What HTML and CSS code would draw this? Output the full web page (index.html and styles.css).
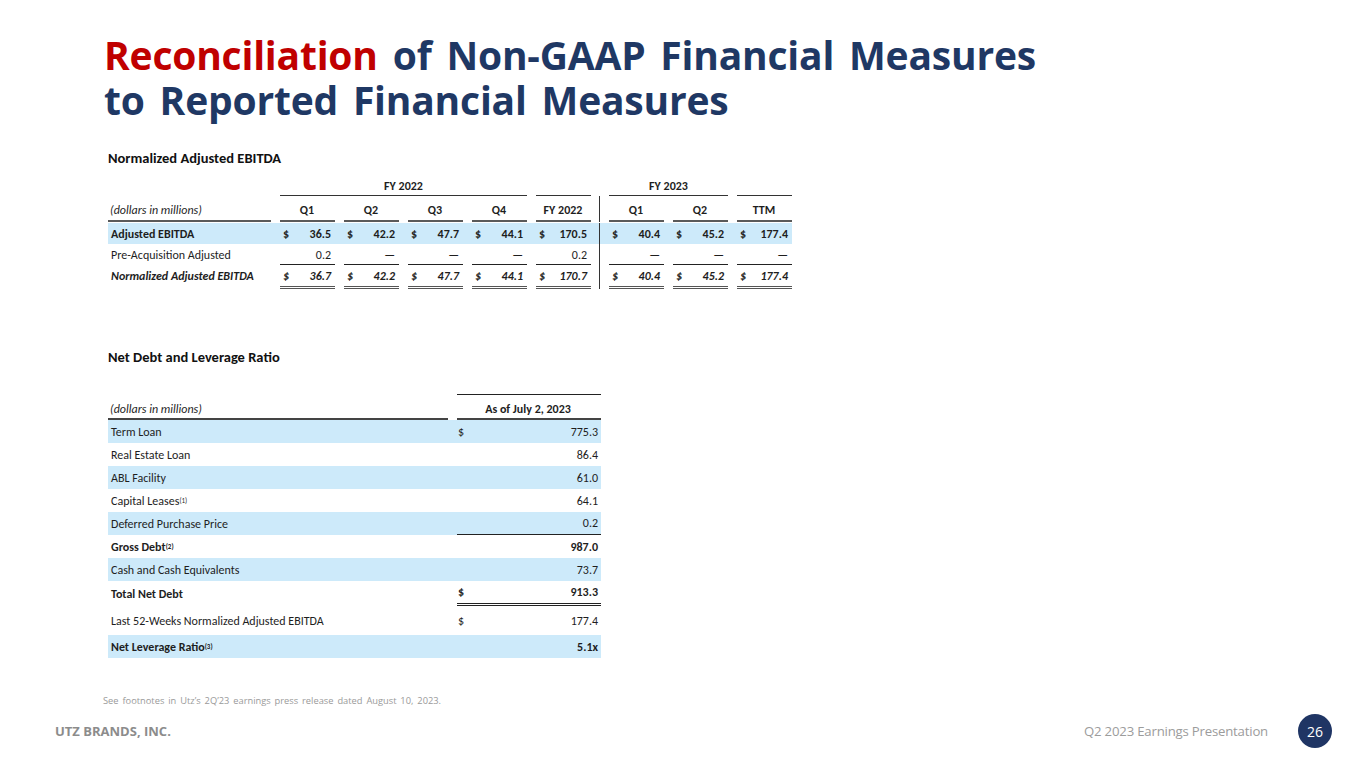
FILE: index.html
```html
<!DOCTYPE html>
<html lang="en">
<head>
<meta charset="utf-8">
<title>Reconciliation of Non-GAAP Financial Measures</title>
<link rel="stylesheet" href="styles.css">
</head>
<body>
<div class="slide">
  <h1 class="title"><span class="red">Reconciliation</span> of Non-GAAP Financial Measures<br>to Reported Financial Measures</h1>

  <section class="t1">
    <h2 class="tbl-title">Normalized Adjusted EBITDA</h2>
    <div class="row grp">
      <div class="lab"></div>
      <div class="grpcell w4">FY 2022</div>
      <div class="c line"></div>
      <div class="vspace"></div>
      <div class="grpcell w2">FY 2023</div>
      <div class="c line"></div>
    </div>
    <div class="row hdr">
      <div class="lab it">(dollars in millions)</div>
      <div class="c">Q1</div>
      <div class="c">Q2</div>
      <div class="c">Q3</div>
      <div class="c">Q4</div>
      <div class="c">FY 2022</div>
      <div class="vdiv"></div>
      <div class="c">Q1</div>
      <div class="c">Q2</div>
      <div class="c">TTM</div>
    </div>
    <div class="row r1 blue b">
      <div class="lab">Adjusted EBITDA</div>
      <div class="c"><span>$</span><span>36.5</span></div>
      <div class="c"><span>$</span><span>42.2</span></div>
      <div class="c"><span>$</span><span>47.7</span></div>
      <div class="c"><span>$</span><span>44.1</span></div>
      <div class="c"><span>$</span><span>170.5</span></div>
      <div class="vdiv"></div>
      <div class="c"><span>$</span><span>40.4</span></div>
      <div class="c"><span>$</span><span>45.2</span></div>
      <div class="c"><span>$</span><span>177.4</span></div>
    </div>
    <div class="row r2">
      <div class="lab">Pre-Acquisition Adjusted</div>
      <div class="c"><span></span><span>0.2</span></div>
      <div class="c"><span></span><span>—</span></div>
      <div class="c"><span></span><span>—</span></div>
      <div class="c"><span></span><span>—</span></div>
      <div class="c"><span></span><span>0.2</span></div>
      <div class="vdiv"></div>
      <div class="c"><span></span><span>—</span></div>
      <div class="c"><span></span><span>—</span></div>
      <div class="c"><span></span><span>—</span></div>
    </div>
    <div class="row r3 b it">
      <div class="lab">Normalized Adjusted EBITDA</div>
      <div class="c"><span>$</span><span>36.7</span></div>
      <div class="c"><span>$</span><span>42.2</span></div>
      <div class="c"><span>$</span><span>47.7</span></div>
      <div class="c"><span>$</span><span>44.1</span></div>
      <div class="c"><span>$</span><span>170.7</span></div>
      <div class="vdiv"></div>
      <div class="c"><span>$</span><span>40.4</span></div>
      <div class="c"><span>$</span><span>45.2</span></div>
      <div class="c"><span>$</span><span>177.4</span></div>
    </div>
  </section>

  <section class="t2">
    <h2 class="tbl-title">Net Debt and Leverage Ratio</h2>
    <div class="row2 hdr2">
      <div class="lab2 it">(dollars in millions)</div>
      <div class="v2 b">As of July 2, 2023</div>
    </div>
    <div class="row2 blue"><div class="lab2">Term Loan</div><div class="v2"><span>$</span><span>775.3</span></div></div>
    <div class="row2"><div class="lab2">Real Estate Loan</div><div class="v2"><span></span><span>86.4</span></div></div>
    <div class="row2 blue"><div class="lab2">ABL Facility</div><div class="v2"><span></span><span>61.0</span></div></div>
    <div class="row2"><div class="lab2">Capital Leases<sup>(1)</sup></div><div class="v2"><span></span><span>64.1</span></div></div>
    <div class="row2 blue"><div class="lab2">Deferred Purchase Price</div><div class="v2 single"><span></span><span>0.2</span></div></div>
    <div class="row2 b"><div class="lab2">Gross Debt<sup>(2)</sup></div><div class="v2"><span></span><span>987.0</span></div></div>
    <div class="row2 blue"><div class="lab2">Cash and Cash Equivalents</div><div class="v2"><span></span><span>73.7</span></div></div>
    <div class="row2 b tall1"><div class="lab2">Total Net Debt</div><div class="v2 dbl"><span>$</span><span>913.3</span></div></div>
    <div class="row2 tall2"><div class="lab2">Last 52-Weeks Normalized Adjusted EBITDA</div><div class="v2"><span>$</span><span>177.4</span></div></div>
    <div class="row2 blue b"><div class="lab2">Net Leverage Ratio<sup>(3)</sup></div><div class="v2"><span></span><span>5.1x</span></div></div>
  </section>

  <p class="note">See footnotes in Utz’s 2Q’23 earnings press release dated August 10, 2023.</p>

  <footer class="foot">
    <span class="brand">UTZ BRANDS, INC.</span>
    <div class="foot-right">
      <span class="pres">Q2 2023 Earnings Presentation</span>
      <span class="page">26</span>
    </div>
  </footer>
</div>
</body>
</html>
```

FILE: styles.css
```css
* { box-sizing: border-box; }
html, body { margin: 0; padding: 0; background: #fff; }
.slide {
  width: 1365px;
  height: 768px;
  overflow: hidden;
  display: flex;
  flex-direction: column;
  font-family: Carlito, Lato, "Open Sans", sans-serif;
  color: #1e1e1e;
}
.title {
  margin: 32px 0 0 104px;
  font-family: "Open Sans", sans-serif;
  font-weight: 700;
  font-size: 39px;
  line-height: 45px;
  color: #1f3864;
  letter-spacing: -0.2px;
  word-spacing: 5px;
}
.red { color: #c00000; }

.tbl-title {
  margin: 0;
  font-size: 14.5px;
  font-weight: 700;
  color: #111;
  line-height: 18px;
}
.t1 { margin: 27px 0 0 108px; }
.t1 .tbl-title { margin-bottom: 12px; }

.b { font-weight: 700; }
.it { font-style: italic; }

.row {
  display: flex;
  width: 684px;
  font-size: 12px;
  line-height: 14px;
}
.row .lab { width: 163px; padding-left: 3px; }
.row .c {
  width: 55px;
  margin-left: 9px;
  display: flex;
  justify-content: space-between;
  padding: 0 4px 0 3px;
}
.vdiv { width: 1px; margin-left: 8px; background: #333; }
.vdiv + .c { margin-left: 9px; }
.vspace { width: 1px; margin-left: 8px; }

.grp { height: 17px; font-weight: 700; }
.grpcell { margin-left: 9px; border-bottom: 1px solid #333; text-align: center; }
.grpcell.w4 { width: 247px; }
.grpcell.w2 { width: 119px; }
.grp .line { border-bottom: 1px solid #333; }

.hdr { height: 26px; align-items: stretch; }
.hdr .lab, .hdr .c {
  border-bottom: 2px solid #5a5a5a;
  padding-top: 7px;
}
.hdr .c { justify-content: center; font-weight: 700; }
.hdr .lab { padding-left: 2px; }

.blue { background: #cdeafa; }
.r1 { height: 21px; margin-top: 1px; align-items: center; }
.r1 .vdiv, .r2 .vdiv, .r3 .vdiv { align-self: stretch; }
.r2 { height: 21px; align-items: center; }
.r2 .c { border-bottom: 1px solid #222; align-self: stretch; align-items: center; padding-top: 1px; }
.r3 { height: 24px; }
.r3 .lab { padding-top: 4px; }
.r3 .c { border-bottom: 3px double #555; padding-top: 4px; }

.t2 { margin: 59px 0 0 108px; width: 493px; }
.t2 .tbl-title { margin-bottom: 28px; }
.row2 {
  display: flex;
  height: 23px;
  align-items: center;
  font-size: 12px;
  line-height: 14px;
}
.row2 .lab2 { width: 340px; padding-left: 3px; align-self: stretch; display: flex; align-items: center; }
.row2 .v2 {
  width: 144px;
  margin-left: 9px;
  display: flex;
  justify-content: space-between;
  padding: 0 3px 0 1px;
  align-self: stretch;
  align-items: center;
}
.hdr2 { height: 26px; }
.hdr2 .lab2 { border-bottom: 2px solid #444; padding-left: 2px; padding-top: 5px; }
.hdr2 .v2 { border-top: 1px solid #222; border-bottom: 2px solid #444; justify-content: center; padding-top: 4px; }
.v2.single { border-bottom: 1px solid #222; }
.tall1 { height: 25px; }
.v2.dbl { border-bottom: 3px double #222; }
.tall2 { height: 29px; }
.row2 sup { font-size: 7px; line-height: 0; vertical-align: 4px; font-weight: inherit; }

.note {
  margin: 36px 0 0 103px;
  font-family: "Open Sans", sans-serif;
  font-size: 9.3px;
  color: #9a9a9a;
  word-spacing: 1.5px;
}

.foot {
  margin: auto 33px 20px 55px;
  display: flex;
  align-items: center;
  justify-content: space-between;
  font-family: "Open Sans", sans-serif;
}
.brand { font-size: 13px; font-weight: 700; color: #8c8c8c; }
.foot-right { display: flex; align-items: center; gap: 30px; }
.pres { font-size: 13.2px; color: #9c9c9c; letter-spacing: -0.2px; }
.page {
  width: 34px;
  height: 34px;
  border-radius: 50%;
  background: #1f3564;
  color: #fff;
  font-size: 14px;
  display: flex;
  align-items: center;
  justify-content: center;
}
```
